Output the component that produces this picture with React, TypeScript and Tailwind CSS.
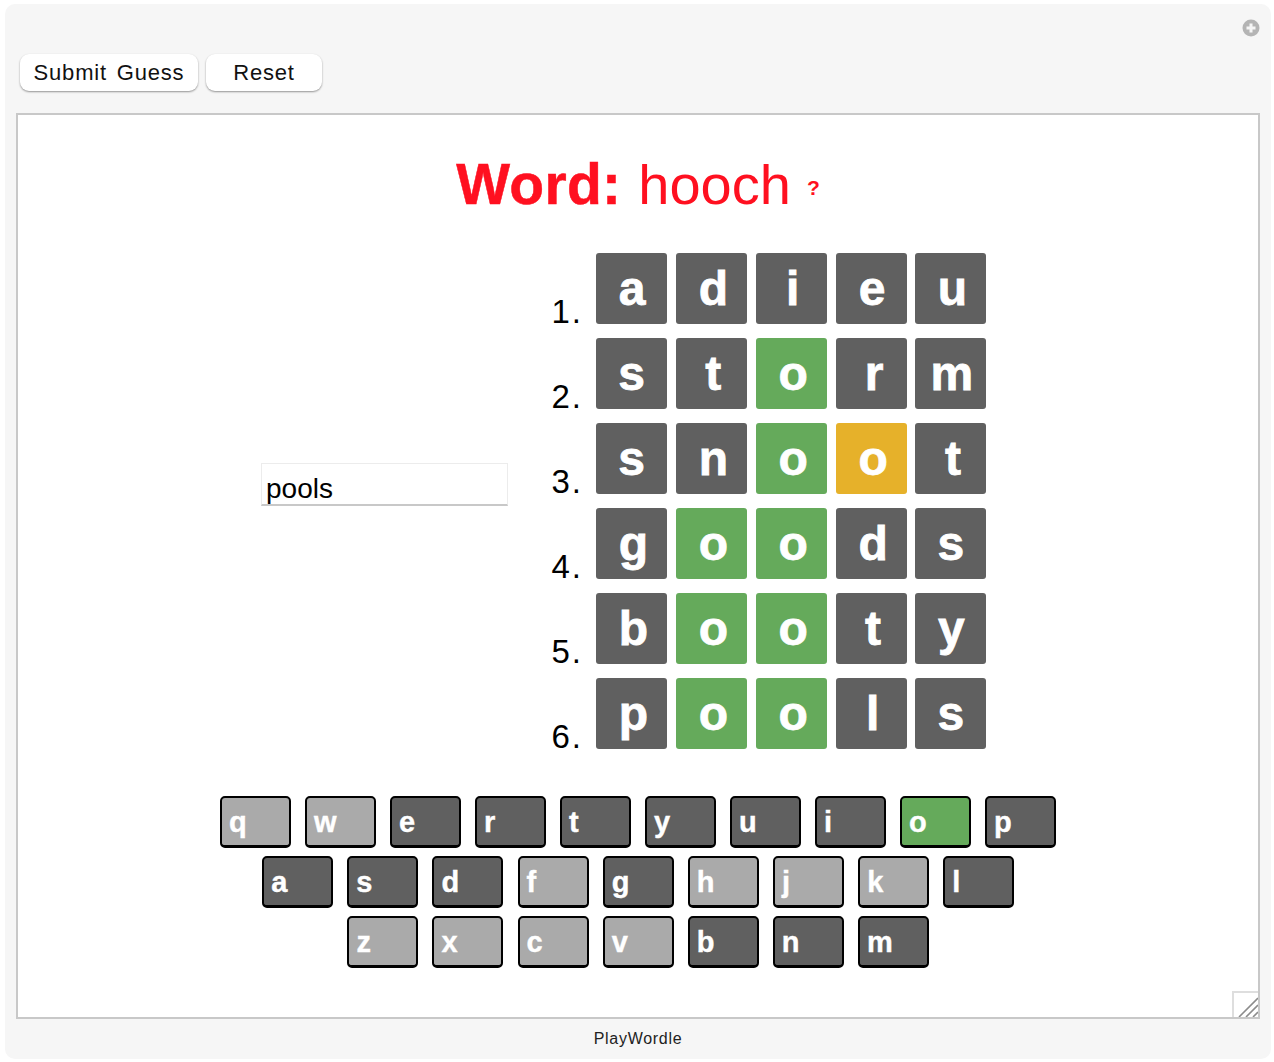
import type { ReactNode } from "react";

type Mark = "x" | "g" | "y";

const guesses: { word: string; marks: Mark[] }[] = [
  { word: "adieu", marks: ["x", "x", "x", "x", "x"] },
  { word: "storm", marks: ["x", "x", "g", "x", "x"] },
  { word: "snoot", marks: ["x", "x", "g", "y", "x"] },
  { word: "goods", marks: ["x", "g", "g", "x", "x"] },
  { word: "booty", marks: ["x", "g", "g", "x", "x"] },
  { word: "pools", marks: ["x", "g", "g", "x", "x"] },
];

const tileColor: Record<Mark, string> = {
  x: "bg-[#606060]",
  g: "bg-[#65aa5b]",
  y: "bg-[#e6b12a]",
};

// letters don't sit dead center in the tiles, each has its own offset
const letterPad: Record<string, string> = {
  a: "pl-[1px]",
  d: "pl-[4px]",
  i: "pl-[3px]",
  e: "pl-[2px]",
  u: "pl-[3px]",
  s: "pl-0",
  t: "pl-[4px]",
  o: "pl-[4px]",
  r: "pl-[6px]",
  m: "pl-[2px]",
  n: "pl-[4px]",
  g: "pl-[4px]",
  b: "pl-[4px]",
  y: "pl-[1px]",
  p: "pl-[4px]",
  l: "pl-[3px]",
};

// q w etc = not used yet (light), o = hit (green), the rest = used (dark)
const light = "qwfhjkzxcv";

const keyRows = ["qwertyuiop", "asdfghjkl", "zxcvbnm"];
const rowClass = [
  "ml-[202px] gap-[14px]",
  "ml-[244.15px] gap-[14.15px]",
  "ml-[329.4px] gap-[14.1px]",
];

function Key({ letter }: { letter: string }) {
  const color =
    letter === "o"
      ? "bg-[#65aa5b]"
      : light.includes(letter)
        ? "bg-[#aaaaaa]"
        : "bg-[#606060]";
  return (
    <div
      className={`${color} w-[71px] h-[52px] shrink-0 rounded-[5px] border-2 border-b-[3px] border-black flex items-center pl-[7px] pt-[1px] text-white font-bold text-[29px] leading-none [-webkit-text-stroke:0.4px_white]`}
    >
      {letter}
    </div>
  );
}

function Tile({ mark, pad, children }: { mark: Mark; pad: string; children: ReactNode }) {
  return (
    <div
      className={`${tileColor[mark]} ${pad} w-[71px] h-[71px] rounded-[3px] flex items-center justify-center text-white font-bold text-[48px] leading-none [-webkit-text-stroke:0.8px_white]`}
    >
      {children}
    </div>
  );
}

function ToolButton({ label, width }: { label: string; width: string }) {
  return (
    <button
      className={`${width} h-[37px] bg-white rounded-[9px] text-[22px] tracking-[0.8px] [word-spacing:3px] text-[#111] shadow-[0_1px_2px_rgba(0,0,0,0.4)] flex items-center justify-center`}
    >
      {label}
    </button>
  );
}

export default function App() {
  return (
    <div
      className="w-[1274px] h-[1062px] bg-white pt-[4px] pl-[5px] overflow-hidden"
      style={{ fontFamily: '"Liberation Sans", Arial, sans-serif' }}
    >
      <div className="relative w-[1266px] h-[1055px] bg-[#f6f6f6] rounded-[10px] pl-[11px] pt-[50px]">
        {/* Plus icon */}
        <svg
          className="absolute left-[1237px] top-[15px]"
          width="18"
          height="18"
          viewBox="0 0 18 18"
        >
          <circle cx="9" cy="9" r="8.5" fill="#b4b4b4" />
          <path d="M9 4.5v9M4.5 9h9" stroke="#f5f5f5" strokeWidth="3" />
        </svg>

        {/* Toolbar */}
        <div className="flex gap-[8px] pl-[4px]">
          <ToolButton label="Submit Guess" width="w-[178px]" />
          <ToolButton label="Reset" width="w-[116px]" />
        </div>

        {/* Main box */}
        <div className="relative mt-[22px] w-[1244px] h-[906px] bg-white border-2 border-[#c8c8c8]">
          <h1 className="pt-[41px] flex items-baseline justify-center leading-none text-[#ff1020]">
            <span className="font-bold text-[57px] tracking-[0.3px] [-webkit-text-stroke:0.5px_#ff1020]">
              Word:
            </span>
            <span className="ml-[17px] text-[56px]">hooch</span>
            <span className="ml-[16px] text-[21px] font-bold -translate-y-[9px]">?</span>
          </h1>

          <div className="flex mt-[40px]">
            <div className="ml-[243px] mt-[210px] w-[247px] h-[43px]">
              <div className="h-[43px] border border-[#ececec] border-b-2 border-b-[#c8c8c8] pl-[4px] text-[28px] text-black flex items-end leading-[30px]">
                pools
              </div>
            </div>

            <div className="ml-[26px] flex flex-col gap-[14px]">
              {guesses.map((g, i) => (
                <div key={g.word} className="flex items-end">
                  <span className="w-[49px] text-right text-[33px] tracking-[2px] leading-none mb-[-4px] text-black">
                    {i + 1}.
                  </span>
                  <div className="ml-[13px] flex gap-[8.87px]">
                    {g.word.split("").map((c, j) => (
                      <Tile key={j} mark={g.marks[j]} pad={letterPad[c]}>
                        {c}
                      </Tile>
                    ))}
                  </div>
                </div>
              ))}
            </div>
          </div>

          {/* Keyboard */}
          <div className="mt-[47px] flex flex-col gap-[8px]">
            {keyRows.map((row, i) => (
              <div key={row} className={`${rowClass[i]} flex`}>
                {row.split("").map((c) => (
                  <Key key={c} letter={c} />
                ))}
              </div>
            ))}
          </div>

          {/* Resize grip */}
          <div className="absolute right-0 bottom-0 w-[26px] h-[26px] border-l-2 border-t-2 border-[#dedede]">
            <svg width="24" height="24" viewBox="0 0 24 24">
              <path
                d="M5 24L24 5M12 24L24 12M19 24L24 19"
                stroke="#8c8c8c"
                strokeWidth="1.6"
                fill="none"
              />
            </svg>
          </div>
        </div>

        <p className="mt-[10px] w-[1244px] text-center text-[16px] tracking-[0.7px] text-[#222] leading-[20px]">
          PlayWordle
        </p>
      </div>
    </div>
  );
}
